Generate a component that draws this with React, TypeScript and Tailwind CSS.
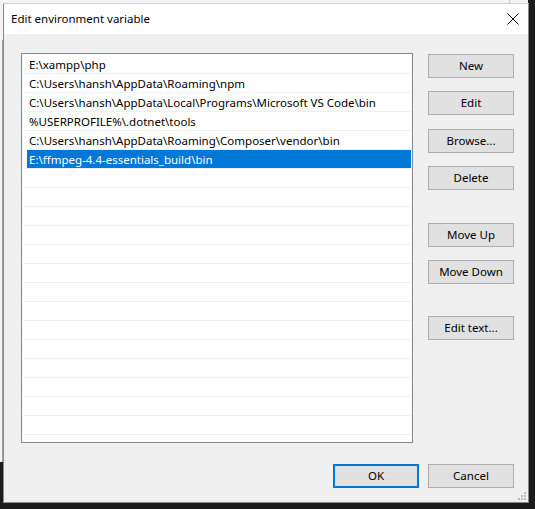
import React from "react";

const paths = [
  "E:\\xampp\\php",
  "C:\\Users\\hansh\\AppData\\Roaming\\npm",
  "C:\\Users\\hansh\\AppData\\Local\\Programs\\Microsoft VS Code\\bin",
  "%USERPROFILE%\\.dotnet\\tools",
  "C:\\Users\\hansh\\AppData\\Roaming\\Composer\\vendor\\bin",
  "E:\\ffmpeg-4.4-essentials_build\\bin",
];

const ROWS = 20;

function Btn({ label, className = "" }: { label: string; className?: string }) {
  return (
    <div
      className={
        "flex h-[24px] w-[86px] items-center justify-center border border-[#adadad] bg-[#e1e1e1] text-[11.5px] text-black " +
        className
      }
    >
      {label}
    </div>
  );
}

export default function App() {
  const rows = Array.from({ length: ROWS }, (_, i) => paths[i] ?? "");
  return (
    <div
      className="relative h-[509px] w-[535px] overflow-hidden bg-[#1c1c1c]"
      style={{ fontFamily: '"Noto Sans", "Open Sans", sans-serif' }}
    >
      {/* background app behind dialog */}
      <div className="absolute left-0 top-0 h-[462px] w-[528px] bg-[#f4f4f4]">
        <div className="absolute left-[2px] top-[40px] h-[422px] w-[1px] bg-[#a0a0a0]" />
        <div className="absolute left-[509px] top-0 h-[3px] w-[1px] bg-[#c8c8c8]" />
      </div>

      {/* dialog window */}
      <div className="absolute left-[3px] top-[3px] flex h-[500px] w-[526px] flex-col border border-[#8a8a8a] border-t-[#d0d0d0] bg-[#f0f0f0]">
        {/* title bar */}
        <div className="relative flex h-[30px] items-center bg-white pl-[7px] text-[11.5px] text-black">
          <span>Edit environment variable</span>
          <svg
            className="absolute left-[503px] top-[9px]"
            width="12"
            height="12"
            viewBox="0 0 12 12"
          >
            <path d="M0.5 0.5 L11.5 11.5 M11.5 0.5 L0.5 11.5" stroke="#000" strokeWidth="1" />
          </svg>
        </div>

        {/* body */}
        <div className="relative flex flex-1 flex-col pl-[17px] pr-[14px] pt-[19px]">
          <div className="flex gap-[15px]">
            {/* list */}
            <div className="h-[390px] w-[392px] overflow-hidden border border-[#828790] bg-white pt-[1px]">
              {rows.map((p, i) => (
                <div key={i} className="mx-[1px] h-[19px] border-b border-[#f0f0f0]">
                  <div
                    className={
                      "flex h-[18px] items-center whitespace-nowrap pl-[2px] pt-[2px] text-[11.5px] " +
                      (i === 5 ? "ml-[4px] bg-[#0078d7] text-white" : "ml-[4px] text-black")
                    }
                  >
                    {p}
                  </div>
                </div>
              ))}
            </div>

            {/* buttons */}
            <div className="flex flex-col">
              <Btn label="New" className="mt-[1px]" />
              <Btn label="Edit" className="mt-[13px]" />
              <Btn label="Browse..." className="mt-[14px]" />
              <Btn label="Delete" className="mt-[13px]" />
              <Btn label="Move Up" className="mt-[33px]" />
              <Btn label="Move Down" className="mt-[13px]" />
              <Btn label="Edit text..." className="mt-[32px]" />
            </div>
          </div>

          <div className="mt-[21px] flex justify-end gap-[9px]">
            <div className="flex h-[24px] w-[86px] items-center justify-center border-2 border-[#0078d7] bg-[#e1e1e1] text-[11.5px] text-black">
              OK
            </div>
            <Btn label="Cancel" />
          </div>

          {/* resize grip */}
          <svg className="absolute bottom-[1px] right-[1px]" width="10" height="10" viewBox="0 0 10 10">
            <rect x="7" y="1" width="2" height="2" fill="#bcbcbc" />
            <rect x="4" y="4" width="2" height="2" fill="#bcbcbc" />
            <rect x="7" y="4" width="2" height="2" fill="#bcbcbc" />
            <rect x="1" y="7" width="2" height="2" fill="#bcbcbc" />
            <rect x="4" y="7" width="2" height="2" fill="#bcbcbc" />
            <rect x="7" y="7" width="2" height="2" fill="#bcbcbc" />
          </svg>
        </div>
      </div>
    </div>
  );
}
